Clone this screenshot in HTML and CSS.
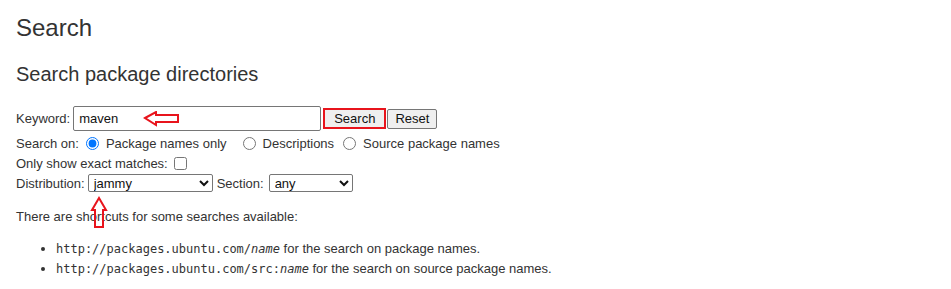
FILE: index.html
```html
<!DOCTYPE html>
<html lang="en">
<head>
<meta charset="UTF-8" />
<title>Ubuntu – Package Search</title>
<link rel="stylesheet" href="styles.css">
</head>
<body>
<h1>Search</h1>

<section class="search-box">
  <h2>Search package directories</h2>
  <form class="search-form">
    <div class="row row-keyword">
      <label for="kw">Keyword:</label>
      <span class="field-wrap">
        <input type="text" id="kw" value="maven" />
        <svg class="mark mark-left" width="40" height="16" viewBox="0 0 40 16">
          <polygon points="2,7 13,1 13,4 35,4 35,11 13,11 13,14" fill="none" stroke="#e8141c" stroke-width="2"/>
        </svg>
      </span>
      <button type="submit" class="btn btn-marked">Search</button>
      <button type="reset" class="btn btn-reset">Reset</button>
    </div>
    <div class="row row-searchon">
      <span>Search on:</span>
      <label class="opt opt-first"><input type="radio" name="searchon" checked />Package names only</label>
      <label class="opt"><input type="radio" name="searchon" />Descriptions</label>
      <label class="opt"><input type="radio" name="searchon" />Source package names</label>
    </div>
    <div class="row">
      <label for="exact">Only show exact matches:</label>
      <input type="checkbox" id="exact" class="check" />
    </div>
    <div class="row">
      <label for="dist">Distribution:</label>
      <select id="dist" class="sel-dist"><option>jammy</option></select>
      <label for="section">Section:</label>
      <select id="section" class="sel-section"><option>any</option></select>
    </div>
  </form>

  <p class="note">There are sho<span class="up-wrap">r<svg class="mark mark-up" width="18" height="34" viewBox="0 0 18 34">
    <polygon points="9,2 16,14 13,14 13,31 5,31 5,14 2,14" fill="none" stroke="#e8141c" stroke-width="2"/>
  </svg></span>tcuts for some searches available:</p>
  <ul class="shortcuts">
    <li><code>http://packages.ubuntu.com/<em>name</em></code> for the search on package names.</li>
    <li><code>http://packages.ubuntu.com/src:<em>name</em></code> for the search on source package names.</li>
  </ul>
</section>
</body>
</html>
```

FILE: styles.css
```css
body {
  margin: 0;
  padding: 0 16px;
  font-family: "Liberation Sans", Arial, sans-serif;
  font-size: 13px;
  color: #333;
  background: #fff;
}
h1 {
  font-size: 24px;
  font-weight: normal;
  line-height: 28px;
  margin: 14px 0 0;
}
h2 {
  font-size: 20px;
  font-weight: normal;
  line-height: 24px;
  margin: 20px 0 0;
}
.search-form {
  margin-top: 20px;
}
.row {
  display: flex;
  align-items: center;
  height: 20px;
}
.row-keyword {
  height: 25px;
  margin-bottom: 2px;
}
label, span, select, input, button {
  font-family: "Liberation Sans", Arial, sans-serif;
  font-size: 13px;
  color: #333;
}
.field-wrap {
  position: relative;
  margin-left: 3px;
  display: flex;
}
#kw {
  width: 248px;
  height: 25px;
  box-sizing: border-box;
  border: 1px solid #767676;
  border-radius: 2px;
  padding: 0 5px;
  color: #111;
  margin: 0;
}
.mark {
  position: absolute;
  pointer-events: none;
}
.mark-left {
  left: 70px;
  top: 5px;
}
.btn {
  height: 20px;
  box-sizing: border-box;
  padding: 0 7px;
  border: 1px solid #767676;
  border-radius: 2px;
  background: #efefef;
  color: #111;
  margin: 0;
}
.btn-marked {
  height: 21px;
  margin-left: 2px;
  border: 2px solid #e8141c;
  border-radius: 0;
  padding: 0 9px;
}
.btn-reset {
  margin-left: 1px;
}
.opt {
  display: flex;
  align-items: center;
}
.opt input {
  margin: 0 7px 0 9px;
  width: 13px;
  height: 13px;
}
.opt-first input {
  margin-left: 7px;
}
.opt-first {
  margin-right: 7px;
}
.check {
  margin: 0 0 0 6px;
  width: 13px;
  height: 13px;
}
select {
  height: 18px;
  box-sizing: border-box;
  border: 1px solid #767676;
  border-radius: 2px;
  background: #fff;
  color: #111;
  padding: 0 1px;
}
.sel-dist {
  width: 125px;
  margin: 0 4px 0 3px;
}
.sel-section {
  width: 84px;
  margin-left: 5px;
}
.note {
  margin: 16px 0 0;
  line-height: 16px;
}
.up-wrap {
  position: relative;
}
.mark-up {
  position: absolute;
  left: -7px;
  top: -13px;
}
.shortcuts {
  margin: 14px 0 0;
  padding-left: 40px;
}
.shortcuts li {
  line-height: 20px;
}
code {
  font-family: "DejaVu Sans Mono", monospace;
  font-size: 12px;
  color: #333;
}
```
